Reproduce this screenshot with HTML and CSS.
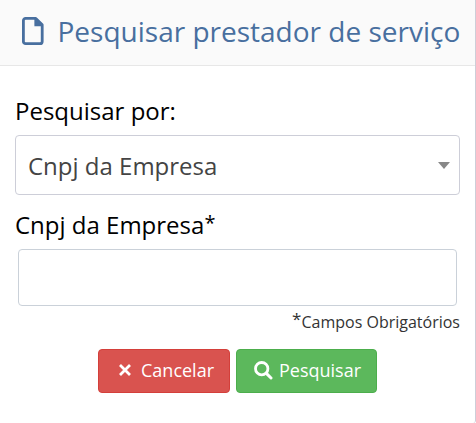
FILE: index.html
```html
<!DOCTYPE html>
<html lang="pt-BR">

<head>
    <meta charset="UTF-8">
    <meta name="viewport" content="width=device-width, initial-scale=1.0">
    <title>Pesquisar prestador de serviço</title>
    <link rel="stylesheet" href="styles.css">
</head>

<body>
    <div class="modal">
        <header class="modal-header">
            <svg class="file-icon" viewBox="0 0 22 28">
                <path fill="none" stroke="currentColor" stroke-width="2.8" stroke-linejoin="round"
                    d="M3.4 1.4H13.8L20.2 7.8V24.4a2.2 2.2 0 0 1-2.2 2.2H3.6a2.2 2.2 0 0 1-2.2-2.2V3.6a2.2 2.2 0 0 1 2.2-2.2Z" />
                <path fill="currentColor" d="M12.4 1H14.4L20.8 7.4V9.2H12.4Z" />
            </svg>
            <h1 class="modal-title">Pesquisar prestador de serviço</h1>
        </header>
        <form class="modal-body">
            <label class="field-label">Pesquisar por:</label>
            <div class="select">
                <span class="select-value">Cnpj da Empresa</span>
                <span class="select-arrow"></span>
            </div>
            <label class="field-label field-label-input" for="cnpj">Cnpj da Empresa<sup class="required">*</sup></label>
            <input class="input" id="cnpj" type="text">
            <p class="note"><sup class="note-mark">*</sup>Campos Obrigatórios</p>
            <div class="actions">
                <button class="btn btn-danger" type="button">
                    <svg class="btn-icon icon-close" viewBox="0 0 12 12">
                        <path fill="none" stroke="currentColor" stroke-width="2.8" d="M1 1L11 11M11 1L1 11" />
                    </svg>
                    <span>Cancelar</span>
                </button>
                <button class="btn btn-success" type="button">
                    <svg class="btn-icon icon-search" viewBox="0 0 19 19">
                        <circle cx="7.7" cy="7.7" r="6.2" fill="none" stroke="currentColor" stroke-width="2.8" />
                        <path fill="none" stroke="currentColor" stroke-width="3" stroke-linecap="round" d="M12.6 12.6L17 17" />
                    </svg>
                    <span>Pesquisar</span>
                </button>
            </div>
        </form>
    </div>
</body>

</html>
```

FILE: styles.css
```css
* {
    margin: 0;
    padding: 0;
    box-sizing: border-box;
}

body {
    height: 423px;
    overflow: hidden;
    background: #fff;
    font-family: 'Open Sans', sans-serif;
    color: #000;
}

.modal {
    height: 423px;
    background: #fff;
    border-right: 1px solid #cdced8;
    border-bottom-right-radius: 3px;
}

.modal-header {
    display: flex;
    align-items: center;
    height: 66px;
    padding: 0 0 4px 22px;
    background: #fafafa;
    border-bottom: 1px solid #e7e7e7;
    color: #486f9f;
}

.file-icon {
    width: 22px;
    height: 28px;
    margin-right: 13.5px;
}

.modal-title {
    font-size: 28px;
    font-weight: 400;
    line-height: 38px;
    white-space: nowrap;
}

.modal-body {
    padding: 28px 15px 0;
}

.field-label {
    display: block;
    font-size: 24px;
    line-height: 34px;
    height: 41px;
}

.field-label-input {
    height: 54px;
    padding-top: 13px;
}

.required {
    font-size: 20px;
    line-height: 0;
    vertical-align: 4px;
}

.select {
    display: flex;
    align-items: center;
    justify-content: space-between;
    height: 60px;
    padding: 0 9px 0 12px;
    border: 1px solid #cdced8;
    border-radius: 4px;
    font-size: 24px;
    color: #444;
}

.select-arrow {
    margin-top: 1px;
    border-top: 7px solid #888;
    border-left: 6px solid transparent;
    border-right: 6px solid transparent;
}

.input {
    display: block;
    width: 439px;
    height: 57px;
    margin-left: 3px;
    padding: 0 12px;
    border: 1px solid #cad1d9;
    border-radius: 4px;
    background: #fff;
    font: inherit;
    font-size: 24px;
}

.note {
    height: 43px;
    padding-top: 4px;
    font-size: 16px;
    line-height: 24px;
    text-align: right;
    color: #333;
}

.note-mark {
    font-size: 17px;
    line-height: 0;
    vertical-align: 3px;
}

.actions {
    display: flex;
    justify-content: center;
    gap: 6px;
}

.btn {
    display: flex;
    align-items: center;
    height: 44px;
    padding-bottom: 2px;
    border: 1px solid;
    border-radius: 4px;
    font-family: inherit;
    font-size: 18px;
    color: #fff;
}

.btn-danger {
    width: 132px;
    padding-left: 20px;
    background: #d9534f;
    border-color: #d43f3a;
}

.btn-success {
    width: 141px;
    padding-left: 17px;
    background: #5cb85c;
    border-color: #4cae4c;
}

.icon-close {
    width: 12px;
    height: 12px;
    margin-right: 10px;
}

.icon-search {
    width: 19px;
    height: 19px;
    margin-right: 6px;
}
```
